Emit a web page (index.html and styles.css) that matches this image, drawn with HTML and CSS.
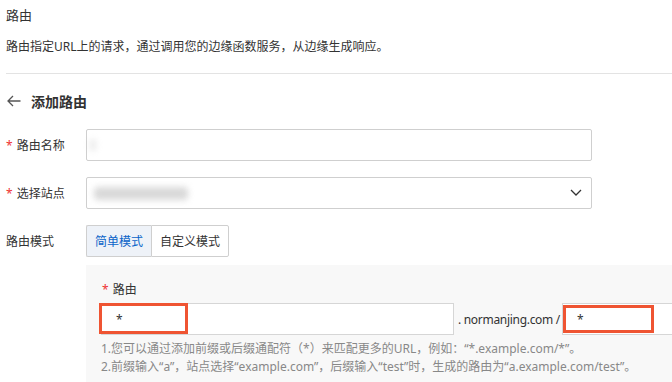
FILE: index.html
```html
<!DOCTYPE html>
<html lang="zh-CN">
<head>
    <meta charset="UTF-8">
    <meta name="viewport" content="width=device-width, initial-scale=1.0">
    <title>路由</title>
    <link rel="stylesheet" href="styles.css">
</head>
<body>
    <div class="page">
        <div class="title">路由</div>
        <div class="desc">路由指定URL上的请求，通过调用您的边缘函数服务，从边缘生成响应。</div>
        <div class="divider"></div>

        <!-- Back heading -->
        <div class="back">
            <svg class="back-icon" width="14" height="12" viewBox="0 0 14 12">
                <path d="M13.5 6H1M6 1L1 6l5 5" fill="none" stroke="#555" stroke-width="1.3"/>
            </svg>
            <span>添加路由</span>
        </div>

        <form class="form">
            <div class="row">
                <label class="label"><span class="req">*</span>路由名称</label>
                <div class="field">
                    <span class="blur blur-small"></span>
                </div>
            </div>

            <div class="row">
                <label class="label"><span class="req">*</span>选择站点</label>
                <div class="field select">
                    <span class="blur blur-wide"></span>
                    <svg class="chevron" width="12" height="7" viewBox="0 0 12 7">
                        <path d="M1 1l5 5 5-5" fill="none" stroke="#333" stroke-width="1.3"/>
                    </svg>
                </div>
            </div>

            <div class="row">
                <label class="label">路由模式</label>
                <div class="modes">
                    <button type="button" class="mode active">简单模式</button>
                    <button type="button" class="mode">自定义模式</button>
                </div>
            </div>

            <!-- Simple mode panel -->
            <div class="panel">
                <div class="panel-label"><span class="req">*</span>路由</div>
                <div class="route">
                    <div class="route-input prefix">
                        <span class="star">*</span>
                        <span class="mark mark-prefix"></span>
                    </div>
                    <span class="domain">. normanjing.com /</span>
                    <div class="route-input suffix">
                        <span class="star">*</span>
                        <span class="mark mark-suffix"></span>
                    </div>
                </div>
                <div class="help">
                    <p>1.您可以通过添加前缀或后缀通配符（*）来匹配更多的URL，例如：“*.example.com/*”。</p>
                    <p>2.前缀输入“a”，站点选择“example.com”，后缀输入“test”时，生成的路由为“a.example.com/test”。</p>
                </div>
            </div>
        </form>
    </div>
</body>
</html>
```

FILE: styles.css
```css
/* General page styling */
body {
    margin: 0;
    background: #fff;
    color: #333;
    font-family: "Noto Sans", "Noto Sans CJK SC", sans-serif;
    font-size: 12px;
    overflow: hidden;
}

.page {
    padding: 4px 0 0 6px;
}

.title {
    font-size: 13px;
    line-height: 22px;
}

.desc {
    margin-top: 12px;
    line-height: 18px;
}

.divider {
    margin-top: 17px;
    border-top: 1px solid #e3e3e3;
}

/* Back heading */
.back {
    display: flex;
    align-items: center;
    gap: 10px;
    margin-top: 17px;
    height: 20px;
    font-size: 14px;
    font-weight: bold;
}

.back-icon {
    margin-left: 1px;
}

/* Form rows */
.form {
    margin-top: 18px;
}

.row {
    display: flex;
    align-items: center;
    margin-bottom: 16px;
}

.label {
    width: 80px;
    flex-shrink: 0;
    font-size: 12px;
}

.req {
    color: #e33;
    margin-right: 4px;
}

.field {
    position: relative;
    box-sizing: border-box;
    width: 506px;
    height: 32px;
    border: 1px solid #cfcfcf;
    border-radius: 2px;
    display: flex;
    align-items: center;
}

.blur {
    display: block;
    background: #c9c9c9;
    filter: blur(3px);
    border-radius: 4px;
}

.blur-small {
    width: 6px;
    height: 12px;
    margin-left: 3px;
    opacity: 0.4;
}

.blur-wide {
    width: 94px;
    height: 13px;
    margin-left: 7px;
    opacity: 0.7;
}

.chevron {
    position: absolute;
    right: 9px;
    top: 11px;
}

/* Mode switch */
.modes {
    display: flex;
}

.mode {
    height: 32px;
    padding: 0 8px;
    background: #fff;
    border: 1px solid #cfcfcf;
    font-family: inherit;
    font-size: 12px;
    color: #333;
    cursor: pointer;
}

.mode:first-child {
    border-radius: 2px 0 0 2px;
    border-right: none;
}

.mode:last-child {
    border-radius: 0 2px 2px 0;
}

.mode.active {
    background: #eef2f8;
    color: #0a64c8;
}

/* Route panel */
.panel {
    margin: -8px 0 0 80px;
    padding: 16px 0 20px 15px;
    background: #f8f8f8;
}

.panel-label {
    line-height: 18px;
    margin-left: 1px;
    margin-bottom: 4px;
    font-size: 12px;
}

.route {
    display: flex;
    align-items: center;
    white-space: nowrap;
}

.route-input {
    position: relative;
    box-sizing: border-box;
    height: 32px;
    background: #fff;
    border: 1px solid #d6d6d6;
    flex-shrink: 0;
    display: flex;
    align-items: center;
}

.prefix {
    width: 353px;
}

.suffix {
    width: 160px;
}

.star {
    margin-left: 14px;
    font-size: 12px;
    color: #333;
}

.domain {
    padding: 0 2px 0 4px;
    font-size: 12px;
    letter-spacing: -0.3px;
}

/* Red annotation boxes */
.mark {
    position: absolute;
    box-sizing: border-box;
    border: 3px solid #ef5432;
}

.mark-prefix {
    left: -3px;
    top: -1px;
    width: 89px;
    height: 31px;
}

.mark-suffix {
    left: 0;
    top: 1px;
    width: 91px;
    height: 28px;
}

.help {
    margin-top: 5px;
    color: #888;
    font-size: 12px;
    line-height: 18px;
    white-space: nowrap;
}

.help p {
    margin: 0;
}
```
